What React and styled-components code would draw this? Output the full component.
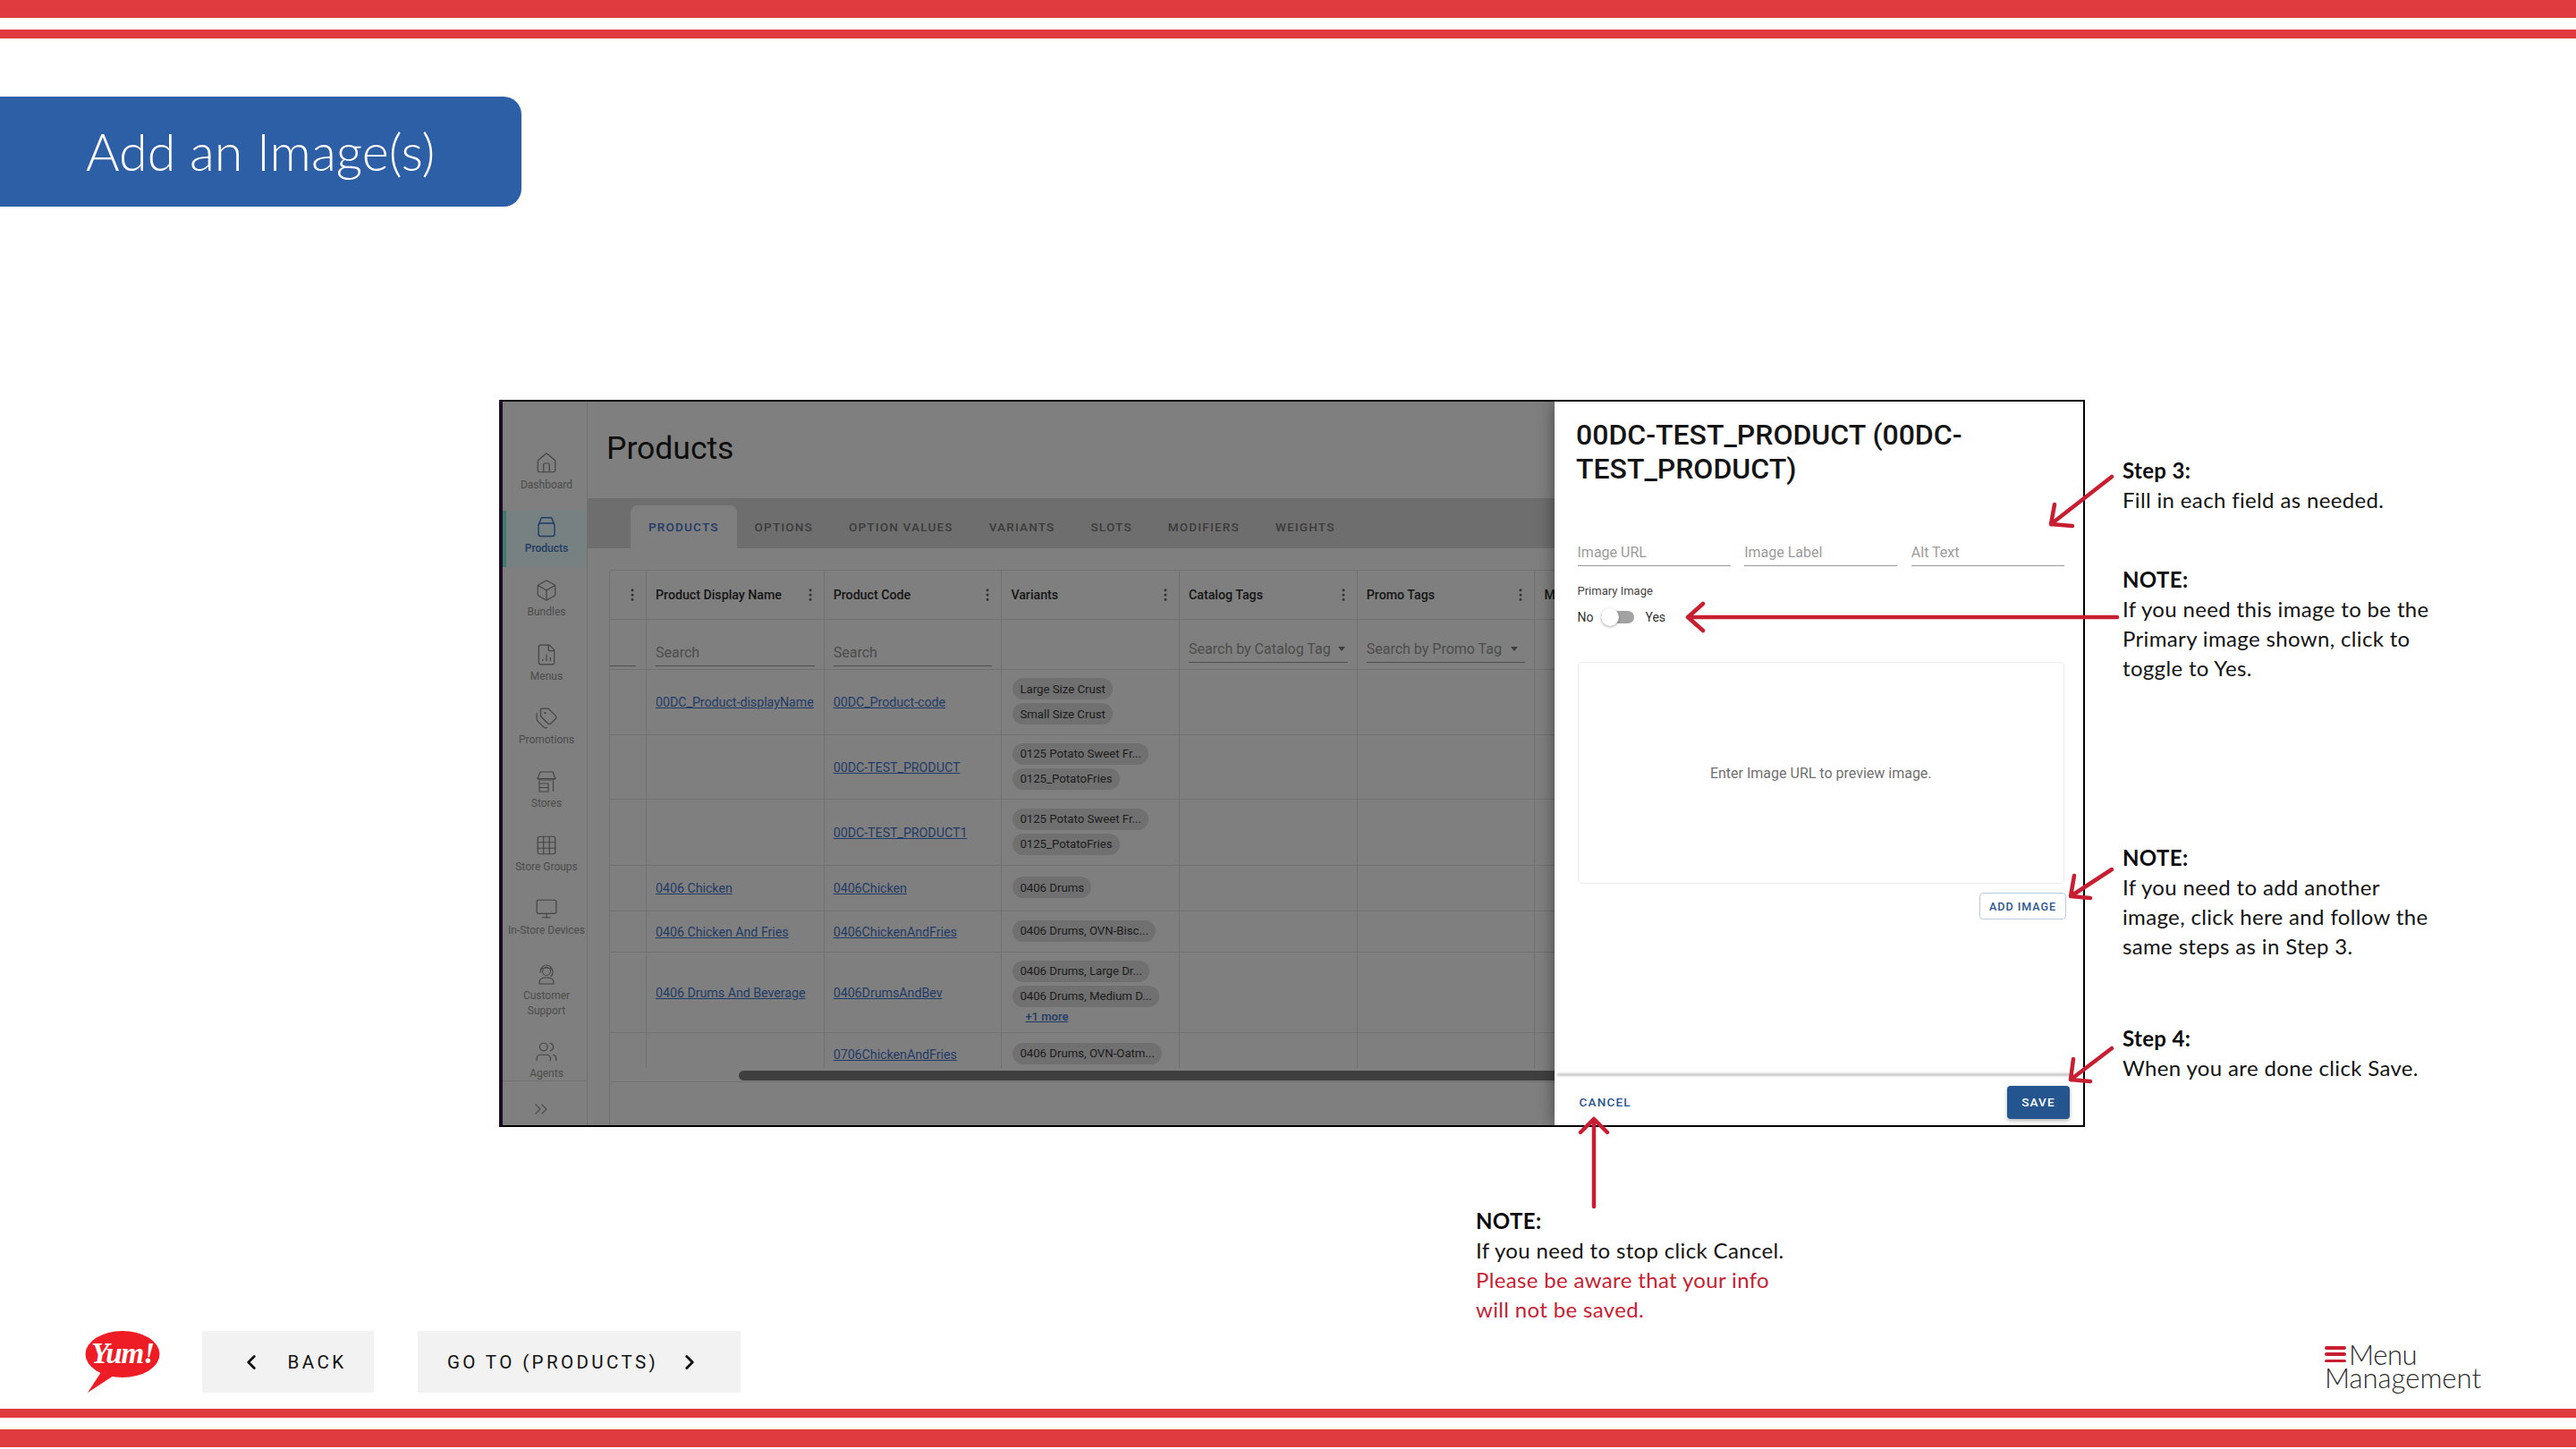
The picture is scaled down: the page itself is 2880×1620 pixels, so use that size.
import React from "react";
import styled, { createGlobalStyle } from "styled-components";
import { Box, ChevronLeft, ChevronRight, ChevronsRight, EllipsisVertical, Grid3x3, Home, Monitor, Tags, Users, FileChartColumn } from "lucide-react";

const RED = "#e03c40";
const ARROW = "#c81e32";
const LINK = "#1f3b66";
const BLUE = "#2a5590";
const LINE = "#717171";

const Global = createGlobalStyle`
  html, body { margin: 0; padding: 0; background: #fff; }
  * { box-sizing: border-box; }
`;

const Page = styled.div`
  position: relative;
  width: 2880px;
  height: 1620px;
  overflow: hidden;
  display: flex;
  flex-direction: column;
  background: #fff;
  font-family: "Lato", sans-serif;
`;
const Stripes = styled.div`
  display: flex;
  flex-direction: column;
  gap: 13px;
  margin-top: ${(p) => p.$top || 0}px;
`;
const Stripe = styled.div`
  height: ${(p) => p.$h}px;
  background: ${RED};
`;
const Banner = styled.div`
  width: 583px;
  height: 123px;
  margin-top: 65px;
  padding: 0 0 3px 96px;
  display: flex;
  align-items: center;
  background: #2c5fa6;
  border-radius: 0 20px 20px 0;
  color: #fff;
  font-size: 57.5px;
  font-weight: 300;
`;
const Stage = styled.div`
  display: flex;
  margin-top: 216px;
  padding-left: 558px;
  height: 813px;
`;
const Frame = styled.div`
  width: 1773px;
  height: 813px;
  flex: none;
  display: flex;
  overflow: hidden;
  border: 2px solid #000;
  border-left: 4px solid #1c0b26;
  background: #7f7f7f;
  font-family: "Roboto", sans-serif;
`;

/* sidebar */
const Side = styled.nav`
  width: 95px;
  flex: none;
  display: flex;
  flex-direction: column;
  gap: 8px;
  padding-top: 51px;
  border-right: 1px solid ${LINE};
`;
const SideItem = styled.div`
  flex: none;
  display: flex;
  flex-direction: column;
  align-items: center;
  height: ${(p) => p.$h || 63.2}px;
  padding-top: 5px;
  gap: ${(p) => (p.$h === 80 ? 4 : 3)}px;
  color: ${(p) => (p.$active ? LINK : "#444")};
  background: ${(p) => (p.$active ? "#778181" : "none")};
  border-left: 4px solid ${(p) => (p.$active ? "#41796f" : "transparent")};
  svg { flex: none; }
`;
const SideLabel = styled.span`
  flex: none;
  font-size: 12px;
  line-height: 17px;
  text-align: center;
  white-space: pre-line;
  font-weight: ${(p) => (p.$active ? 500 : 400)};
  color: ${(p) => (p.$active ? LINK : "#4b4b4b")};
`;
const SideFoot = styled.div`
  margin-top: auto;
  height: 50px;
  display: flex;
  align-items: center;
  padding: 12px 0 0 31px;
  border-top: 1px solid ${LINE};
  color: #4b4b4b;
`;

/* products page behind the dialog */
const Main = styled.div`
  flex: 1;
  min-width: 0;
  display: flex;
  flex-direction: column;
  overflow: hidden;
`;
const PageTitle = styled.h1`
  height: 108px;
  margin: 0;
  padding: 31px 0 0 21px;
  font-size: 35.500px;
  line-height: 42px;
  font-weight: 400;
  color: #0e0e0e;
`;
const TabBar = styled.div`
  height: 56px;
  flex: none;
  display: flex;
  align-items: flex-end;
  padding-left: 48px;
  background: #6e6e6e;
`;
const Tab = styled.div`
  height: 48px;
  padding: 0 20px;
  display: flex;
  align-items: center;
  font-size: 13.5px;
  font-weight: 500;
  letter-spacing: 1.2px;
  border-radius: 8px 8px 0 0;
  color: ${(p) => (p.$active ? LINK : "#3b3b3b")};
  background: ${(p) => (p.$active ? "#7f7f7f" : "none")};
`;
const TableWrap = styled.div`
  flex: 1;
  margin: 24px 0 0 24px;
  border-left: 1px solid ${LINE};
  border-top: 1px solid ${LINE};
  border-top-left-radius: 4px;
  overflow: hidden;
  width: 1300px;
`;
const Row = styled.div`
  display: grid;
  grid-template-columns: 41px repeat(6, 198.7px) 120px;
  height: ${(p) => p.$h}px;
  border-bottom: 1px solid ${LINE};
`;
const Body = styled.div`
  height: 445px;
  overflow: hidden;
`;
const Cell = styled.div`
  min-width: 0;
  display: flex;
  align-items: center;
  border-right: 1px solid ${LINE};
  padding-left: 10px;
`;
const HeadCell = styled(Cell)`
  justify-content: space-between;
  padding: 0 6px 1px 10px;
  font-size: 14.2px;
  font-weight: 500;
  color: #151515;
  white-space: nowrap;
  svg { color: #333; flex: none; }
`;
const KebabCell = styled(HeadCell)`
  padding: 0 0 0 16px;
`;
const FilterCell = styled(Cell)`
  align-items: flex-end;
  padding: 0 ${(p) => (p.$flush ? 11 : 10)}px ${(p) => p.$lift || 3}px ${(p) => (p.$flush ? 0 : 10)}px;
`;
const FilterInput = styled.div`
  flex: 1;
  height: 30px;
  display: flex;
  align-items: center;
  justify-content: space-between;
  padding-bottom: 1px;
  border-bottom: 1px solid #4d4d4d;
  font-size: 16px;
  color: #4c4c4c;
  white-space: nowrap;
`;
const Caret = styled.span`
  width: 0;
  height: 0;
  margin-right: ${(p) => p.$right || 0}px;
  border-left: 4px solid transparent;
  border-right: 4px solid transparent;
  border-top: 5px solid #3c3c3c;
`;
const RowLink = styled.a`
  font-size: 14.2px;
  color: ${LINK};
  text-decoration: underline;
  white-space: nowrap;
`;
const ChipCell = styled(Cell)`
  flex-direction: column;
  align-items: flex-start;
  justify-content: center;
  gap: 4px;
  padding: 0 0 2px 12px;
`;
const Chip = styled.span`
  height: 24px;
  padding: 0 8px;
  display: flex;
  align-items: center;
  border-radius: 12px;
  background: #707070;
  font-size: 13.2px;
  color: #1b1b1b;
  white-space: nowrap;
`;
const More = styled(RowLink)`
  font-weight: 500;
  font-size: 13px;
  margin: -1px 0 0 14px;
`;
const ScrollTrack = styled.div`
  height: 16px;
  padding: 3px 0 0 144px;
  border-bottom: 1px solid ${LINE};
`;
const ScrollThumb = styled.div`
  height: 11px;
  width: 1200px;
  border-radius: 6px;
  background: #3f3f3f;
`;

/* dialog */
const Dialog = styled.aside`
  width: 591.5px;
  flex: none;
  display: flex;
  flex-direction: column;
  background: #fff;
  box-shadow: 0 0 18px rgba(0, 0, 0, 0.45);
  z-index: 1;
`;
const DialogTitle = styled.h2`
  margin: 0;
  padding: 18px 60px 0 24.5px;
  font-size: 32px;
  line-height: 38px;
  font-weight: 500;
  color: #141414;
`;
const DialogBody = styled.div`
  padding: 0 21px 0 26px;
  display: flex;
  flex-direction: column;
`;
const Fields = styled.div`
  display: grid;
  grid-template-columns: repeat(3, 1fr);
  gap: 15.5px;
  margin-top: 60px;
`;
const Field = styled.div`
  height: 30px;
  display: flex;
  align-items: center;
  border-bottom: 1px solid #9a9a9a;
  font-size: 16px;
  color: #9b9b9b;
`;
const SwitchLabel = styled.div`
  margin-top: 19px;
  font-size: 13px;
  line-height: 18px;
  color: #444;
`;
const SwitchRow = styled.div`
  margin-top: 10px;
  height: 20px;
  display: flex;
  align-items: center;
  font-size: 14px;
  color: #333;
`;
const Track = styled.span`
  position: relative;
  width: 37px;
  height: 14px;
  margin: 0 12px 0 9px;
  border-radius: 7px;
  background: #a2a2a2;
`;
const Thumb = styled.span`
  position: absolute;
  left: 0;
  top: -3px;
  width: 20px;
  height: 20px;
  border-radius: 50%;
  background: #fff;
  box-shadow: 0 1px 3px rgba(0, 0, 0, 0.35);
`;
const Preview = styled.div`
  margin-top: 40px;
  height: 248px;
  display: flex;
  align-items: center;
  justify-content: center;
  border: 1.5px solid #ececec;
  border-radius: 4px;
  font-size: 16px;
  color: #707070;
`;
const AddImage = styled.button`
  align-self: flex-end;
  width: 97px;
  height: 30px;
  margin: 10px -2px 0 0;
  padding: 0;
  background: #fff;
  border: 1.5px solid #b9cde2;
  border-radius: 4px;
  font-family: inherit;
  font-size: 12.5px;
  font-weight: 500;
  letter-spacing: 1px;
  color: ${BLUE};
`;
const DialogFoot = styled.div`
  position: relative;
  margin-top: auto;
  height: 56px;
  padding: 0 15px 0 28px;
  display: flex;
  align-items: center;
  justify-content: space-between;
  &::before {
    content: "";
    position: absolute;
    top: -2px;
    left: 3px;
    right: 14px;
    height: 3px;
    background: #c4c4c4;
    filter: blur(1px);
  }
`;
const CancelLink = styled.span`
  padding-top: 3px;
  font-size: 13.5px;
  font-weight: 500;
  letter-spacing: 1.2px;
  color: ${BLUE};
`;
const SaveButton = styled.button`
  width: 70px;
  height: 37px;
  margin-top: 4px;
  padding: 0;
  border: 0;
  border-radius: 4px;
  background: #24558f;
  box-shadow: 0 2px 4px rgba(0, 0, 0, 0.3);
  font-family: inherit;
  font-size: 13.5px;
  font-weight: 500;
  letter-spacing: 1.1px;
  color: #fff;
`;

/* notes */
const NoteColumn = styled.div`
  display: flex;
  flex-direction: column;
  margin-left: 42px;
`;
const Note = styled.div`
  margin-top: ${(p) => p.$gap}px;
  font-size: 24px;
  line-height: 33px;
  letter-spacing: 0.35px;
  color: #141414;
  white-space: pre-line;
`;
const NoteHead = styled.b`
  display: block;
  font-weight: 700;
  color: #0c0c0c;
`;
const Warn = styled.span`
  color: ${ARROW};
`;
const LowerNote = styled(Note)`
  margin-left: 1650px;
`;

/* footer */
const Foot = styled.footer`
  display: flex;
  height: 69px;
  margin-top: 8px;
  padding: 0 106px 0 95px;
`;
const Logo = styled.svg`
  width: 84px;
  height: 69px;
  flex: none;
`;
const NavButton = styled.div`
  width: ${(p) => p.$w}px;
  height: 69px;
  margin-left: ${(p) => p.$left}px;
  padding: ${(p) => p.$pad};
  display: flex;
  align-items: center;
  justify-content: center;
  gap: ${(p) => p.$gap}px;
  background: #f2f2f2;
  font-family: "Roboto", sans-serif;
  font-size: 20.5px;
  letter-spacing: 3.4px;
  color: #111;
`;
const MenuMark = styled.div`
  margin: 13px 0 0 auto;
  font-size: 31px;
  line-height: 26px;
  font-weight: 300;
  color: #2b2b2b;
`;
const MenuLine = styled.div`
  display: flex;
  align-items: center;
  gap: 3px;
  letter-spacing: -0.4px;
`;
const Bars = styled.span`
  width: 24px;
  height: 18px;
  display: flex;
  flex-direction: column;
  justify-content: space-between;
  i {
    display: block;
    height: 3.5px;
    border-radius: 2px;
    background: ${ARROW};
  }
`;
const Arrows = styled.svg`
  position: absolute;
  inset: 0;
  width: 2880px;
  height: 1620px;
  pointer-events: none;
  z-index: 2;
`;

const iconProps = { size: 26, strokeWidth: 1.1 };

const ProductsIcon = () => (
  <svg width="26" height="26" viewBox="0 0 26 26" fill="none" stroke="currentColor" strokeWidth="1.4" strokeLinejoin="round">
    <rect x="4" y="9" width="18" height="14.5" rx="2.5" />
    <path d="M4.500 10 7 3.500a1 1 0 0 1 1-.8h10a1 1 0 0 1 1 .8l2.500 6.500" />
  </svg>
);
const StoreIcon = () => (
  <svg width="26" height="26" viewBox="0 0 26 26" fill="none" stroke="currentColor" strokeWidth="1.1" strokeLinejoin="round">
    <path d="M6 2h14l3 7.500H3z" />
    <path d="M3 9.500c0 2 20 2 20 0" />
    <path d="M5 11.500V24h10v-9H5M5 19.500h10M20.500 11.500V24" />
  </svg>
);
const SupportIcon = () => (
  <svg width="26" height="26" viewBox="0 0 26 26" fill="none" stroke="currentColor" strokeWidth="1.1" strokeLinecap="round">
    <path d="M6 12a7 8 0 1 1 14 0c0 2-1 3.500-2 4.500" />
    <circle cx="13" cy="11" r="4.500" />
    <path d="M7.500 8.500C9 6.500 17 6.500 18.500 8.500" />
    <path d="M5 25v-2c0-3 3-5 8-5s8 2 8 5v2z" />
  </svg>
);

const NAV = [
  { label: "Dashboard", icon: <Home {...iconProps} /> },
  { label: "Products", icon: <ProductsIcon />, active: true },
  { label: "Bundles", icon: <Box {...iconProps} /> },
  { label: "Menus", icon: <FileChartColumn {...iconProps} /> },
  { label: "Promotions", icon: <Tags {...iconProps} /> },
  { label: "Stores", icon: <StoreIcon /> },
  { label: "Store Groups", icon: <Grid3x3 {...iconProps} /> },
  { label: "In-Store Devices", icon: <Monitor {...iconProps} /> },
  { label: "Customer\nSupport", icon: <SupportIcon />, h: 80 },
  { label: "Agents", icon: <Users {...iconProps} />, h: 42 },
];

const TABS = ["PRODUCTS", "OPTIONS", "OPTION VALUES", "VARIANTS", "SLOTS", "MODIFIERS", "WEIGHTS"];

const ROWS = [
  { h: 73, name: "00DC_Product-displayName", code: "00DC_Product-code", chips: ["Large Size Crust", "Small Size Crust"] },
  { h: 72, code: "00DC-TEST_PRODUCT", chips: ["0125 Potato Sweet Fr...", "0125_PotatoFries"] },
  { h: 74, code: "00DC-TEST_PRODUCT1", chips: ["0125 Potato Sweet Fr...", "0125_PotatoFries"] },
  { h: 51, name: "0406 Chicken", code: "0406Chicken", chips: ["0406 Drums"] },
  { h: 46, name: "0406 Chicken And Fries", code: "0406ChickenAndFries", chips: ["0406 Drums, OVN-Bisc..."] },
  { h: 90, name: "0406 Drums And Beverage", code: "0406DrumsAndBev", chips: ["0406 Drums, Large Dr...", "0406 Drums, Medium D..."], more: "+1 more" },
  { h: 48, code: "0706ChickenAndFries", chips: ["0406 Drums, OVN-Oatm..."] },
];

const Kebab = () => <EllipsisVertical size={18} strokeWidth={2} />;

const App = () => (
  <Page>
    <Global />
    <Stripes>
      <Stripe $h={20} />
      <Stripe $h={10} />
    </Stripes>
    <Banner>Add an Image(s)</Banner>

    <Stage>
      <Frame>
        <Side>
          {NAV.map((item) => (
            <SideItem key={item.label} $active={item.active} $h={item.h}>
              {item.icon}
              <SideLabel $active={item.active}>{item.label}</SideLabel>
            </SideItem>
          ))}
          <SideFoot>
            <ChevronsRight size={24} strokeWidth={1.1} />
          </SideFoot>
        </Side>

        <Main>
          <PageTitle>Products</PageTitle>
          <TabBar>
            {TABS.map((tab, i) => (
              <Tab key={tab} $active={i === 0}>{tab}</Tab>
            ))}
          </TabBar>
          <TableWrap>
            <Row $h={55}>
              <KebabCell><Kebab /></KebabCell>
              <HeadCell>Product Display Name<Kebab /></HeadCell>
              <HeadCell>Product Code<Kebab /></HeadCell>
              <HeadCell>Variants<Kebab /></HeadCell>
              <HeadCell>Catalog Tags<Kebab /></HeadCell>
              <HeadCell>Promo Tags<Kebab /></HeadCell>
              <HeadCell>M</HeadCell>
            </Row>
            <Row $h={56}>
              <FilterCell $flush><FilterInput /></FilterCell>
              <FilterCell><FilterInput>Search</FilterInput></FilterCell>
              <FilterCell><FilterInput>Search</FilterInput></FilterCell>
              <Cell />
              <FilterCell $lift={7}><FilterInput>Search by Catalog Tag<Caret $right={3} /></FilterInput></FilterCell>
              <FilterCell $lift={7}><FilterInput>Search by Promo Tag<Caret $right={8} /></FilterInput></FilterCell>
              <Cell />
            </Row>
            <Body>
              {ROWS.map((row) => (
                <Row key={row.code} $h={row.h}>
                  <Cell />
                  <Cell>{row.name && <RowLink>{row.name}</RowLink>}</Cell>
                  <Cell><RowLink>{row.code}</RowLink></Cell>
                  <ChipCell>
                    {row.chips.map((chip) => (
                      <Chip key={chip}>{chip}</Chip>
                    ))}
                    {row.more && <More>{row.more}</More>}
                  </ChipCell>
                  <Cell />
                  <Cell />
                  <Cell />
                </Row>
              ))}
            </Body>
            <ScrollTrack>
              <ScrollThumb />
            </ScrollTrack>
          </TableWrap>
        </Main>

        <Dialog>
          <DialogTitle>00DC-TEST_PRODUCT (00DC-TEST_PRODUCT)</DialogTitle>
          <DialogBody>
            <Fields>
              <Field>Image URL</Field>
              <Field>Image Label</Field>
              <Field>Alt Text</Field>
            </Fields>
            <SwitchLabel>Primary Image</SwitchLabel>
            <SwitchRow>
              No
              <Track><Thumb /></Track>
              Yes
            </SwitchRow>
            <Preview>Enter Image URL to preview image.</Preview>
            <AddImage>ADD IMAGE</AddImage>
          </DialogBody>
          <DialogFoot>
            <CancelLink>CANCEL</CancelLink>
            <SaveButton>SAVE</SaveButton>
          </DialogFoot>
        </Dialog>
      </Frame>

      <NoteColumn>
        <Note $gap={62}><NoteHead>Step 3:</NoteHead>Fill in each field as needed.</Note>
        <Note $gap={56}><NoteHead>NOTE:</NoteHead>{"If you need this image to be the\nPrimary image shown, click to\ntoggle to Yes."}</Note>
        <Note $gap={179}><NoteHead>NOTE:</NoteHead>{"If you need to add another\nimage, click here and follow the\nsame steps as in Step 3."}</Note>
        <Note $gap={70}><NoteHead>Step 4:</NoteHead>When you are done click Save.</Note>
      </NoteColumn>
    </Stage>

    <LowerNote $gap={88}>
      <NoteHead>NOTE:</NoteHead>
      If you need to stop click Cancel.
      <Warn>{"\nPlease be aware that your info\nwill not be saved."}</Warn>
    </LowerNote>

    <Foot>
      <Logo viewBox="0 0 84 69">
        <ellipse cx="42" cy="26" rx="41.500" ry="26" fill="#ee1c25" />
        <path d="M18 46 3 69 32 50z" fill="#ee1c25" />
        <text x="42" y="36" textAnchor="middle" fill="#fff" fontFamily="Liberation Serif, serif" fontWeight="700" fontStyle="italic" fontSize="33" letterSpacing="-1">Yum!</text>
      </Logo>
      <NavButton $w={192} $left={47} $gap={28} $pad="0 0 0 11px">
        <ChevronLeft size={26} strokeWidth={2.6} />
        BACK
      </NavButton>
      <NavButton $w={361} $left={49} $gap={22} $pad="0 11px 0 0">
        GO TO (PRODUCTS)
        <ChevronRight size={26} strokeWidth={2.6} />
      </NavButton>
      <MenuMark>
        <MenuLine><Bars><i /><i /><i /></Bars>Menu</MenuLine>
        Management
      </MenuMark>
    </Foot>

    <Stripes $top={18}>
      <Stripe $h={10} />
      <Stripe $h={20} />
    </Stripes>

    <Arrows viewBox="0 0 2880 1620" fill="none" stroke={ARROW} strokeWidth="4.500" strokeLinecap="round" strokeLinejoin="round">
      <path d="M2361 533 2293 586M2297 564 2293 586 2317 588" />
      <path d="M2367 690H1889M1904 675 1887 690 1904 705" />
      <path d="M2361 972 2315 1002M2319 979 2315 1002 2337 1004" />
      <path d="M2361 1172 2315 1207M2318 1184 2315 1207 2337 1209" />
      <path d="M1782 1349V1252M1767 1266 1782 1251 1797 1266" />
    </Arrows>
  </Page>
);

export default App;
